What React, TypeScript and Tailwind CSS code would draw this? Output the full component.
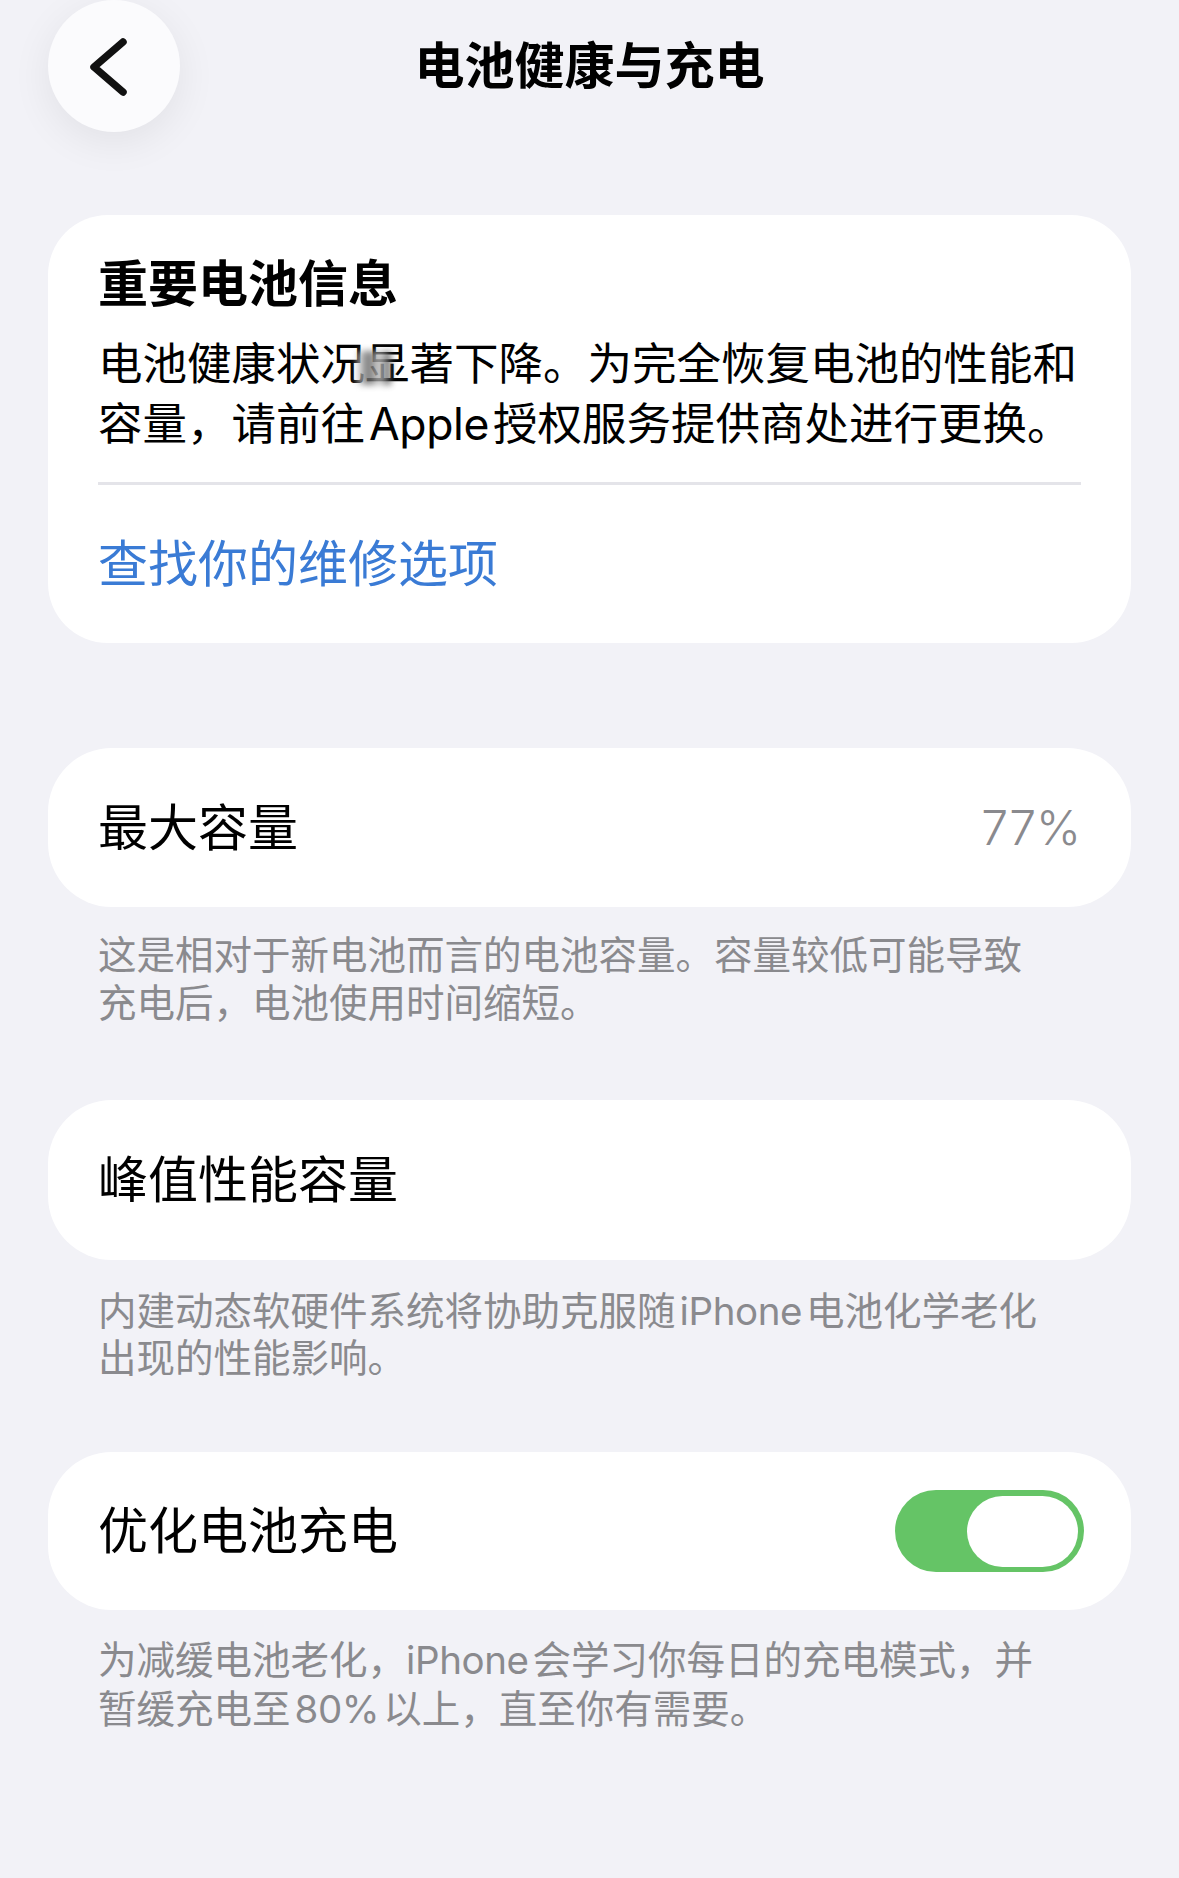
function L({ children }: { children: string }) {
  return <span className="mx-[4px] tracking-[-0.4px]">{children}</span>;
}

export default function App() {
  return (
    <div className="min-h-[1878px] w-full bg-[#f2f2f7] font-['Inter','Noto_Sans_CJK_SC',sans-serif] text-black">
      <header className="grid h-[132px] grid-cols-[1fr_auto_1fr] items-center px-[48px]">
        <div className="flex">
          <div className="flex h-[132px] w-[132px] items-center justify-center rounded-full bg-[#fbfbfd] shadow-[0_10px_40px_rgba(0,0,0,0.07)]">
            <svg width="132" height="132" viewBox="0 0 132 132" fill="none">
              <path d="M75 42 L46 67 L75 92" stroke="#111" strokeWidth="7.5" strokeLinecap="round" strokeLinejoin="round" />
            </svg>
          </div>
        </div>
        <h1 className="text-[50px] font-bold leading-none">电池健康与充电</h1>
        <div />
      </header>

      <section className="mx-[48px] mt-[83px] rounded-[60px] bg-white px-[50px] pt-[39px]">
        <h2 className="text-[50px] font-semibold leading-[60px]">重要电池信息</h2>
        <p className="mt-[20px] text-[44.5px] leading-[60px]">
          <span className="block whitespace-nowrap">
            电池健康状况
            <span className="relative">
              显
              <span className="absolute left-[-8px] top-[14px] h-[34px] w-[34px] bg-[linear-gradient(90deg,#e6e6e6,#555,#cfcfcf,#333)] opacity-80 blur-[3px]" />
            </span>
            著下降。为完全恢复电池的性能和
          </span>
          <span className="block whitespace-nowrap">
            容量，请前往<L>Apple</L>授权服务提供商处进行更换。
          </span>
        </p>
        <div className="mt-[28px] h-[3px] bg-[#e4e4e9]" />
        <div className="flex h-[158px] items-center text-[50px] text-[#3a7bd5]">查找你的维修选项</div>
      </section>

      <section className="mx-[48px] mt-[105px] flex h-[159px] items-center justify-between rounded-[64px] bg-white pl-[50px] pr-[50px]">
        <span className="text-[50px] leading-none">最大容量</span>
        <span className="text-[48px] font-light leading-none text-[#8a8a8e]">77%</span>
      </section>
      <p className="mt-[24px] px-[98px] text-[38.5px] leading-[48px] text-[#8a8a8e]">
        <span className="block whitespace-nowrap">这是相对于新电池而言的电池容量。容量较低可能导致</span>
        <span className="block whitespace-nowrap">充电后，电池使用时间缩短。</span>
      </p>

      <section className="mx-[48px] mt-[73px] flex h-[160px] items-center rounded-[64px] bg-white px-[50px]">
        <span className="text-[50px] leading-none">峰值性能容量</span>
      </section>
      <p className="mt-[28px] px-[98px] text-[38.5px] leading-[47px] text-[#8a8a8e]">
        <span className="block whitespace-nowrap">
          内建动态软硬件系统将协助克服随<L>iPhone</L>电池化学老化
        </span>
        <span className="block whitespace-nowrap">出现的性能影响。</span>
      </p>

      <section className="mx-[48px] mt-[70px] flex h-[158px] items-center justify-between rounded-[64px] bg-white pl-[50px] pr-[47px]">
        <span className="text-[50px] leading-none">优化电池充电</span>
        <div className="flex h-[82px] w-[189px] items-center justify-end rounded-full bg-[#65c466] pr-[6px]">
          <div className="h-[71px] w-[111px] rounded-full bg-white" />
        </div>
      </section>
      <p className="mt-[26px] px-[98px] text-[38.5px] leading-[49px] text-[#8a8a8e]">
        <span className="block whitespace-nowrap">
          为减缓电池老化，<span className="tracking-[-0.4px]">iPhone</span>
          <span className="ml-[4px]">会学习你每日的充电模式，并</span>
        </span>
        <span className="block whitespace-nowrap">
          暂缓充电至<L>80%</L>以上，直至你有需要。
        </span>
      </p>
    </div>
  );
}
